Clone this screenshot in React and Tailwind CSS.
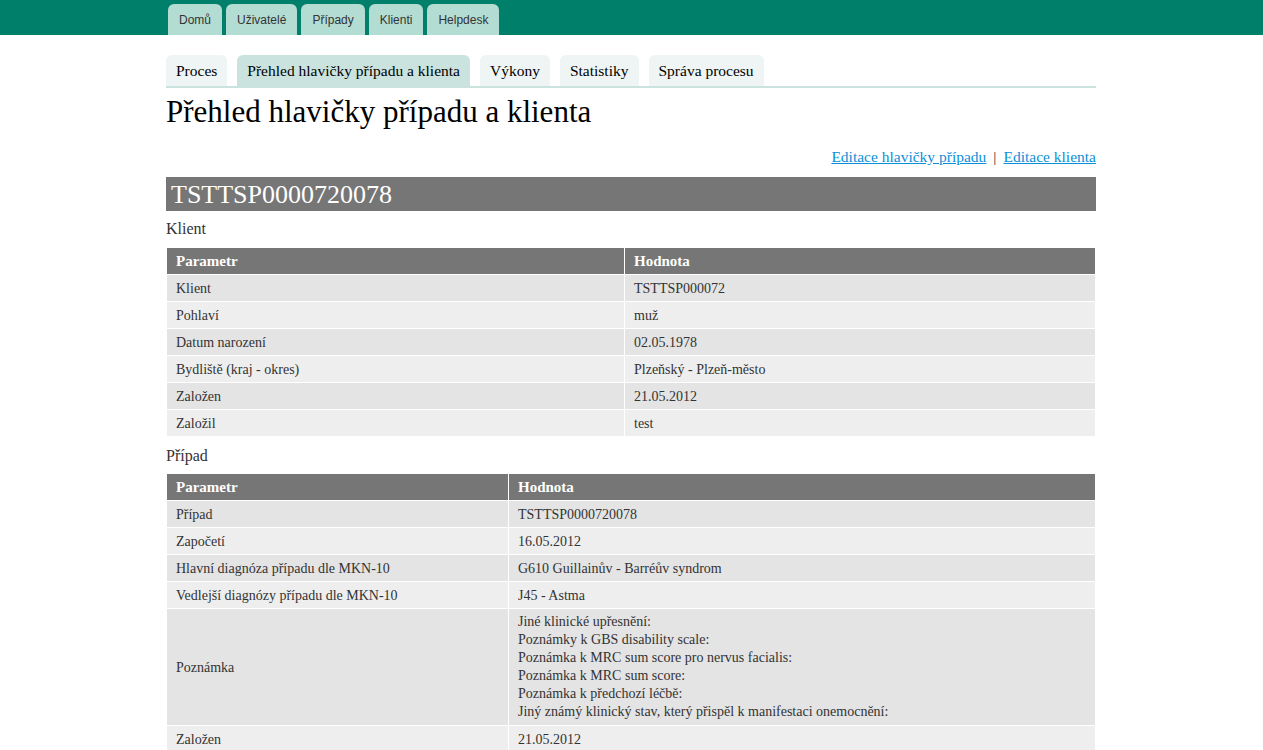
import React from "react";

const topTabs = ["Domů", "Uživatelé", "Případy", "Klienti", "Helpdesk"];
const subTabs = ["Proces", "Přehled hlavičky případu a klienta", "Výkony", "Statistiky", "Správa procesu"];

const klient = [
  ["Klient", "TSTTSP000072"],
  ["Pohlaví", "muž"],
  ["Datum narození", "02.05.1978"],
  ["Bydliště (kraj - okres)", "Plzeňský - Plzeň-město"],
  ["Založen", "21.05.2012"],
  ["Založil", "test"],
];

const pripad = [
  ["Případ", "TSTTSP0000720078"],
  ["Započetí", "16.05.2012"],
  ["Hlavní diagnóza případu dle MKN-10", "G610 Guillainův - Barréův syndrom"],
  ["Vedlejší diagnózy případu dle MKN-10", "J45 - Astma"],
  [
    "Poznámka",
    [
      "Jiné klinické upřesnění:",
      "Poznámky k GBS disability scale:",
      "Poznámka k MRC sum score pro nervus facialis:",
      "Poznámka k MRC sum score:",
      "Poznámka k předchozí léčbě:",
      "Jiný známý klinický stav, který přispěl k manifestaci onemocnění:",
    ],
  ],
  ["Založen", "21.05.2012"],
];

function ParamTable({ rows, firstCol }) {
  return (
    <table className="w-full border-collapse text-[14px] text-[#333]">
      <thead>
        <tr className="bg-[#767676] text-white">
          <th className={`${firstCol} h-[27px] border border-white px-[9px] text-left text-[15px] font-bold`}>Parametr</th>
          <th className="h-[27px] border border-white px-[9px] text-left text-[15px] font-bold">Hodnota</th>
        </tr>
      </thead>
      <tbody>
        {rows.map(([k, v], i) => (
          <tr key={k + i} className={i % 2 === 0 ? "bg-[#e4e4e4]" : "bg-[#eeeeee]"}>
            <td className="h-[27px] border border-white px-[9px]">{k}</td>
            <td className="h-[27px] border border-white px-[9px]">
              {Array.isArray(v) ? (
                <div className="py-[4px] leading-[18px]">
                  {v.map((line) => (
                    <div key={line}>{line}</div>
                  ))}
                </div>
              ) : (
                v
              )}
            </td>
          </tr>
        ))}
      </tbody>
    </table>
  );
}

export default function App() {
  return (
    <div className="min-h-[750px] bg-white font-['Liberation_Serif',serif]">
      {/* top nav */}
      <div className="h-[35px] bg-[#007f6a]">
        <div className="ml-[166px] flex h-full w-[930px] items-end gap-[4px] pl-[2px]">
          {topTabs.map((t) => (
            <div
              key={t}
              className="flex h-[31px] items-center rounded-t-[6px] bg-[#b3dcd3] px-[11px] font-['Liberation_Sans',sans-serif] text-[12px] text-[#333]"
            >
              {t}
            </div>
          ))}
        </div>
      </div>

      <div className="ml-[166px] w-[930px]">
        {/* sub tabs */}
        <div className="mt-[20px] flex gap-[10px] border-b-2 border-[#cbe3df]">
          {subTabs.map((t, i) => (
            <div
              key={t}
              className={`flex h-[31px] items-center rounded-t-[6px] px-[10px] text-[15.5px] text-black ${
                i === 1 ? "bg-[#cbe3df]" : "bg-[#eef5f4]"
              }`}
            >
              {t}
            </div>
          ))}
        </div>

        <h1 className="mt-[6px] text-[31px] leading-[36px] text-black">Přehled hlavičky případu a klienta</h1>

        <div className="mt-[17px] flex justify-end gap-[7px] text-[15.5px] leading-[20px] text-[#333]">
          <a href="#" className="text-[#0b8fd9] underline">Editace hlavičky případu</a>
          <span>|</span>
          <a href="#" className="text-[#0b8fd9] underline">Editace klienta</a>
        </div>

        <div className="mt-[10px] flex h-[34px] items-center bg-[#767676] px-[5px] text-[26px] text-white">
          TSTTSP0000720078
        </div>

        <div className="mt-[8px] text-[16px] leading-[20px] text-[#333]">Klient</div>
        <div className="mt-[8px]">
          <ParamTable rows={klient} firstCol="w-[458px]" />
        </div>

        <div className="mt-[9px] text-[16px] leading-[20px] text-[#333]">Případ</div>
        <div className="mt-[7px]">
          <ParamTable rows={pripad} firstCol="w-[342px]" />
        </div>
      </div>
    </div>
  );
}
